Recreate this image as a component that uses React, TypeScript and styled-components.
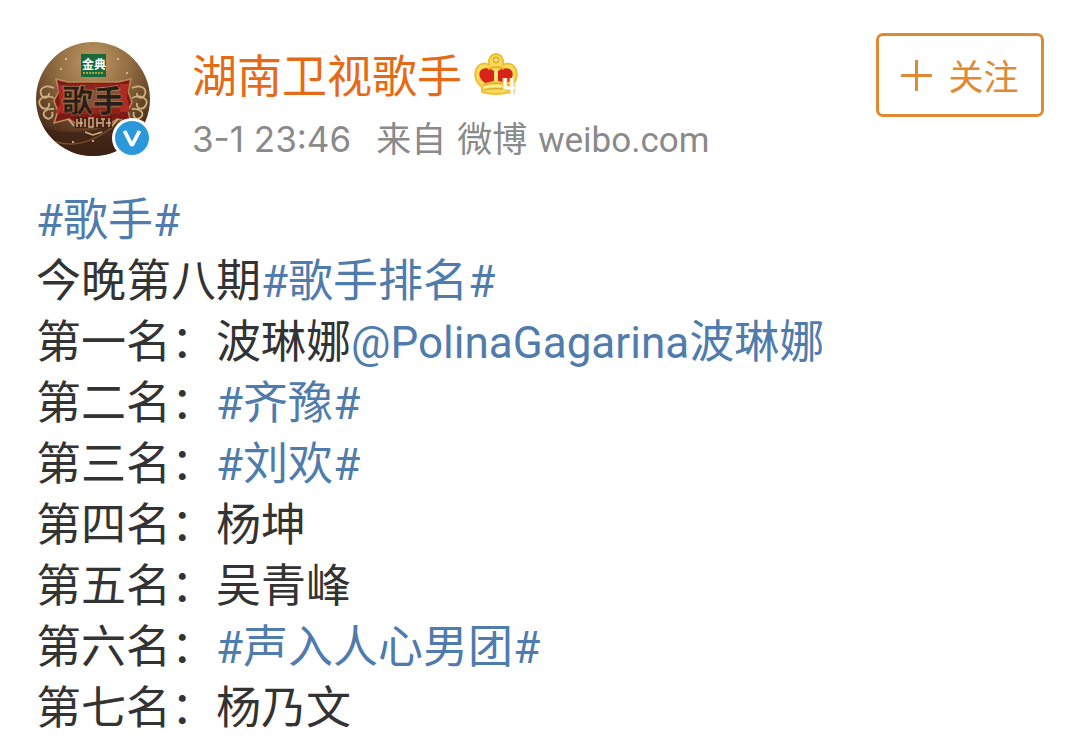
import React from "react";
import styled, { createGlobalStyle } from "styled-components";

const GlobalStyle = createGlobalStyle`
  *, *::before, *::after { box-sizing: border-box; }
  body {
    margin: 0;
    background: #fff;
    font-family: "Noto Sans CJK SC", sans-serif;
  }
`;

const Post = styled.article`
  padding: 33px 33px 0 36px;
  color: #333;
`;

const Header = styled.header`
  display: flex;
  align-items: flex-start;
`;

const AvatarLink = styled.a`
  position: relative;
  flex: none;
  display: block;
  width: 116px;
  height: 116px;
  margin: 9px 40px 0 0;
  svg { display: block; }
`;

const Badge = styled.span`
  position: absolute;
  right: 0;
  bottom: 0;
`;

const Author = styled.div`
  flex: 1;
  min-width: 0;
  padding-top: 11px;
`;

const NameRow = styled.div`
  display: flex;
  align-items: center;
  gap: 12px;
  height: 60px;
`;

const Name = styled.a`
  font-size: 45px;
  line-height: 60px;
  color: #e66a16;
  text-decoration: none;
  white-space: nowrap;
`;

const Meta = styled.div`
  display: flex;
  align-items: baseline;
  margin-top: 7px;
  font-size: 35px;
  line-height: 52px;
  color: #8a8a8a;
  white-space: nowrap;
`;

const Time = styled.time`
  margin-right: 25px;
  font-family: Inter, sans-serif;
`;

const Source = styled.a`
  display: flex;
  align-items: baseline;
  gap: 11px;
  color: inherit;
  text-decoration: none;
`;

const Site = styled.span`
  font-family: Roboto, sans-serif;
`;

const FollowButton = styled.button`
  display: flex;
  align-items: center;
  justify-content: center;
  gap: 16px;
  flex: none;
  width: 168px;
  height: 84px;
  padding: 0;
  border: 3px solid #df8a30;
  border-radius: 7px;
  background: #fff;
  color: #df8a30;
  font: 35px/50px "Noto Sans CJK SC", sans-serif;
  cursor: pointer;
`;

const Content = styled.div`
  margin-top: 19px;
  font-size: 45px;
  line-height: 61px;
`;

const Line = styled.p`
  margin: 0;
  height: 61px;
  white-space: nowrap;
`;

const TextLink = styled.a`
  color: #4f7cad;
  text-decoration: none;
`;

const Latin = styled.span`
  font-family: Roboto, sans-serif;
  font-size: 44px;
`;

const Topic = ({ children }: { children: string }) => (
  <TextLink href="#topic">
    <Latin>#</Latin>
    {children}
    <Latin>#</Latin>
  </TextLink>
);

const AvatarArt = () => (
  <svg width="114" height="114" viewBox="0 0 114 114" role="img" aria-label="歌手">
    <defs>
      <radialGradient id="bg" cx="50%" cy="18%" r="85%">
        <stop offset="0" stopColor="#c09a66" />
        <stop offset="0.4" stopColor="#8e6a40" />
        <stop offset="0.75" stopColor="#583820" />
        <stop offset="1" stopColor="#331b12" />
      </radialGradient>
      <linearGradient id="gold" x1="0" y1="0" x2="0" y2="1">
        <stop offset="0" stopColor="#c9a674" />
        <stop offset="1" stopColor="#8d6337" />
      </linearGradient>
      <clipPath id="disc"><circle cx="57" cy="57" r="57" /></clipPath>
    </defs>
    <g clipPath="url(#disc)">
      <rect width="114" height="114" fill="url(#bg)" />
      <path d="M6 84Q40 100 104 74L114 114H0Z" fill="#3d2114" opacity=".7" />
      <path d="M20 100Q48 108 78 84" stroke="#a97a45" strokeWidth="1.5" fill="none" opacity=".5" />
      <g fill="none" stroke="#cdb182" strokeWidth="1.8">
        <path d="M18 46C10 42 3 46 5 52s9 4 8-1M18 56C9 52 1 57 4 63s10 4 9-2M18 67c-8-1-13 4-9 8s9 0 7-5" />
        <path d="M96 46c8-4 15 0 13 6s-9 4-8-1M96 56c9-4 17 1 14 7s-10 4-9-2M96 67c8-1 13 4 9 8s-9 0-7-5" />
      </g>
      <path d="M20 37l12 3h50l13-3-3 12 4 11-4 9 3 11-14-3-10 7H43l-10-7-15 4 4-12-4-10 5-10Z" fill="#7d1a17" stroke="#c08a58" strokeWidth="1.5" />
      <path d="M22 43h9v28H20l4-10Zm62-1h9l-2 13 3 15H84Z" fill="#b02a24" />
      <path d="M30 42h54v6H30ZM30 66h54v6H30Z" fill="#8f241c" />
      <path d="M30 48h54v18H30Z" fill="#8a6647" opacity=".7" />
      <text x="26" y="70" fontSize="31" fontWeight="900" fill="#2b1c17" stroke="url(#gold)" strokeWidth=".6" fontFamily="Noto Sans CJK SC, sans-serif">歌手</text>
      <path d="M39 75h37v11H39Z" fill="#4c2015" />
      <g stroke="#cdb08a" strokeWidth="1.5" fill="none">
        <path d="M41 77v8M45 76v9M49 77v8M53 76h4v9h-4ZM61 76v9M65 77h4M67 77v8M73 76v9M42 81h5M61 81h5M70 81h5" />
        <path d="M32 77l6 7M82 77l-6 7M49 90l8 3 9-3" />
      </g>
      <rect x="45" y="12" width="25" height="23" fill="#176b3a" />
      <text x="46" y="27" fontSize="12" fontWeight="700" fill="#fff" fontFamily="Noto Sans CJK SC, sans-serif">金典</text>
      <path d="M47 31h21" stroke="#a6a64e" strokeWidth="2" strokeDasharray="2 1" />
      <g fill="#efcf96">
        <circle cx="30" cy="17" r="1" /><circle cx="82" cy="17" r="1" />
        <circle cx="25" cy="27" r="1" /><circle cx="91" cy="31" r="1" />
        <circle cx="37" cy="100" r="1" /><circle cx="57" cy="99" r="1" />
      </g>
    </g>
  </svg>
);

const VerifiedIcon = () => (
  <svg width="40" height="40" viewBox="0 0 40 40" role="img" aria-label="认证">
    <circle cx="20" cy="20" r="20" fill="#fff" />
    <circle cx="20" cy="20" r="17" fill="#2b98dc" />
    <path d="M12.5 13L20 27.5 27.5 13" fill="none" stroke="#fff" strokeWidth="3.8" strokeLinejoin="bevel" />
  </svg>
);

const CrownIcon = () => (
  <svg width="44" height="44" viewBox="0 0 44 44" role="img" aria-label="4">
    <path d="M8 40V35C2 30 0 24 2 18c2-6 8-8 13-5-1-6 2-11 7-11s8 5 7 11c5-3 11-1 13 5 2 6 0 12-6 17v5q-14 4-28 0Z" fill="#fadb55" stroke="#efbf3a" strokeWidth="2" strokeLinejoin="round" />
    <circle cx="22" cy="8" r="2.5" fill="#fff8c0" stroke="#e3b02f" strokeWidth="1.8" />
    <path d="M11 31C5 27 4 21 7 18s10-2 13 1v10Z" fill="#d62418" />
    <path d="M33 31c6-4 7-10 4-13s-10-2-13 1v10Z" fill="#d62418" />
    <path d="M14 17q8-4 16 0" fill="none" stroke="#e8b030" strokeWidth="2" />
    <path d="M20.500 18h3v11h-3Z" fill="#fbe57c" />
    <path d="M9 33q13-4 26 0M10 38q12-3 24 0" fill="none" stroke="#dfa92d" strokeWidth="1.5" />
    <path d="M10 35.5q12-3 24 0" fill="none" stroke="#fff0a0" strokeWidth="2" />
    <path d="M31 26v10h11M38 26v16" fill="none" stroke="#f0c64a" strokeWidth="5" strokeLinejoin="round" />
    <path d="M31 26v10h11M38 26v16" fill="none" stroke="#fff" strokeWidth="3" />
  </svg>
);

const PlusIcon = () => (
  <svg width="31" height="31" viewBox="0 0 31 31" aria-hidden="true">
    <path d="M15.5 1v29M1 15.5h29" stroke="currentColor" strokeWidth="3" strokeLinecap="round" />
  </svg>
);

type Rank = { label: string; name?: string; topic?: string; mention?: [string, string] };

const ranks: Rank[] = [
  { label: "第一名：", name: "波琳娜", mention: ["@PolinaGagarina", "波琳娜"] },
  { label: "第二名：", topic: "齐豫" },
  { label: "第三名：", topic: "刘欢" },
  { label: "第四名：", name: "杨坤" },
  { label: "第五名：", name: "吴青峰" },
  { label: "第六名：", topic: "声入人心男团" },
  { label: "第七名：", name: "杨乃文" },
];

export default function App() {
  return (
    <>
      <GlobalStyle />
      <Post lang="zh-CN">
        <Header>
          <AvatarLink href="#profile">
            <AvatarArt />
            <Badge><VerifiedIcon /></Badge>
          </AvatarLink>
          <Author>
            <NameRow>
              <Name href="#profile">湖南卫视歌手</Name>
              <CrownIcon />
            </NameRow>
            <Meta>
              <Time>3-1 23:46</Time>
              <Source href="#source">
                <span>来自</span>
                <span>微博</span>
                <Site>weibo.com</Site>
              </Source>
            </Meta>
          </Author>
          <FollowButton type="button">
            <PlusIcon />
            关注
          </FollowButton>
        </Header>
        <Content>
          <Line><Topic>歌手</Topic></Line>
          <Line>今晚第八期<Topic>歌手排名</Topic></Line>
          {ranks.map((rank) => (
            <Line key={rank.label}>
              {rank.label}
              {rank.name}
              {rank.topic && <Topic>{rank.topic}</Topic>}
              {rank.mention && (
                <TextLink href="#mention">
                  <Latin>{rank.mention[0]}</Latin>
                  {rank.mention[1]}
                </TextLink>
              )}
            </Line>
          ))}
        </Content>
      </Post>
    </>
  );
}
